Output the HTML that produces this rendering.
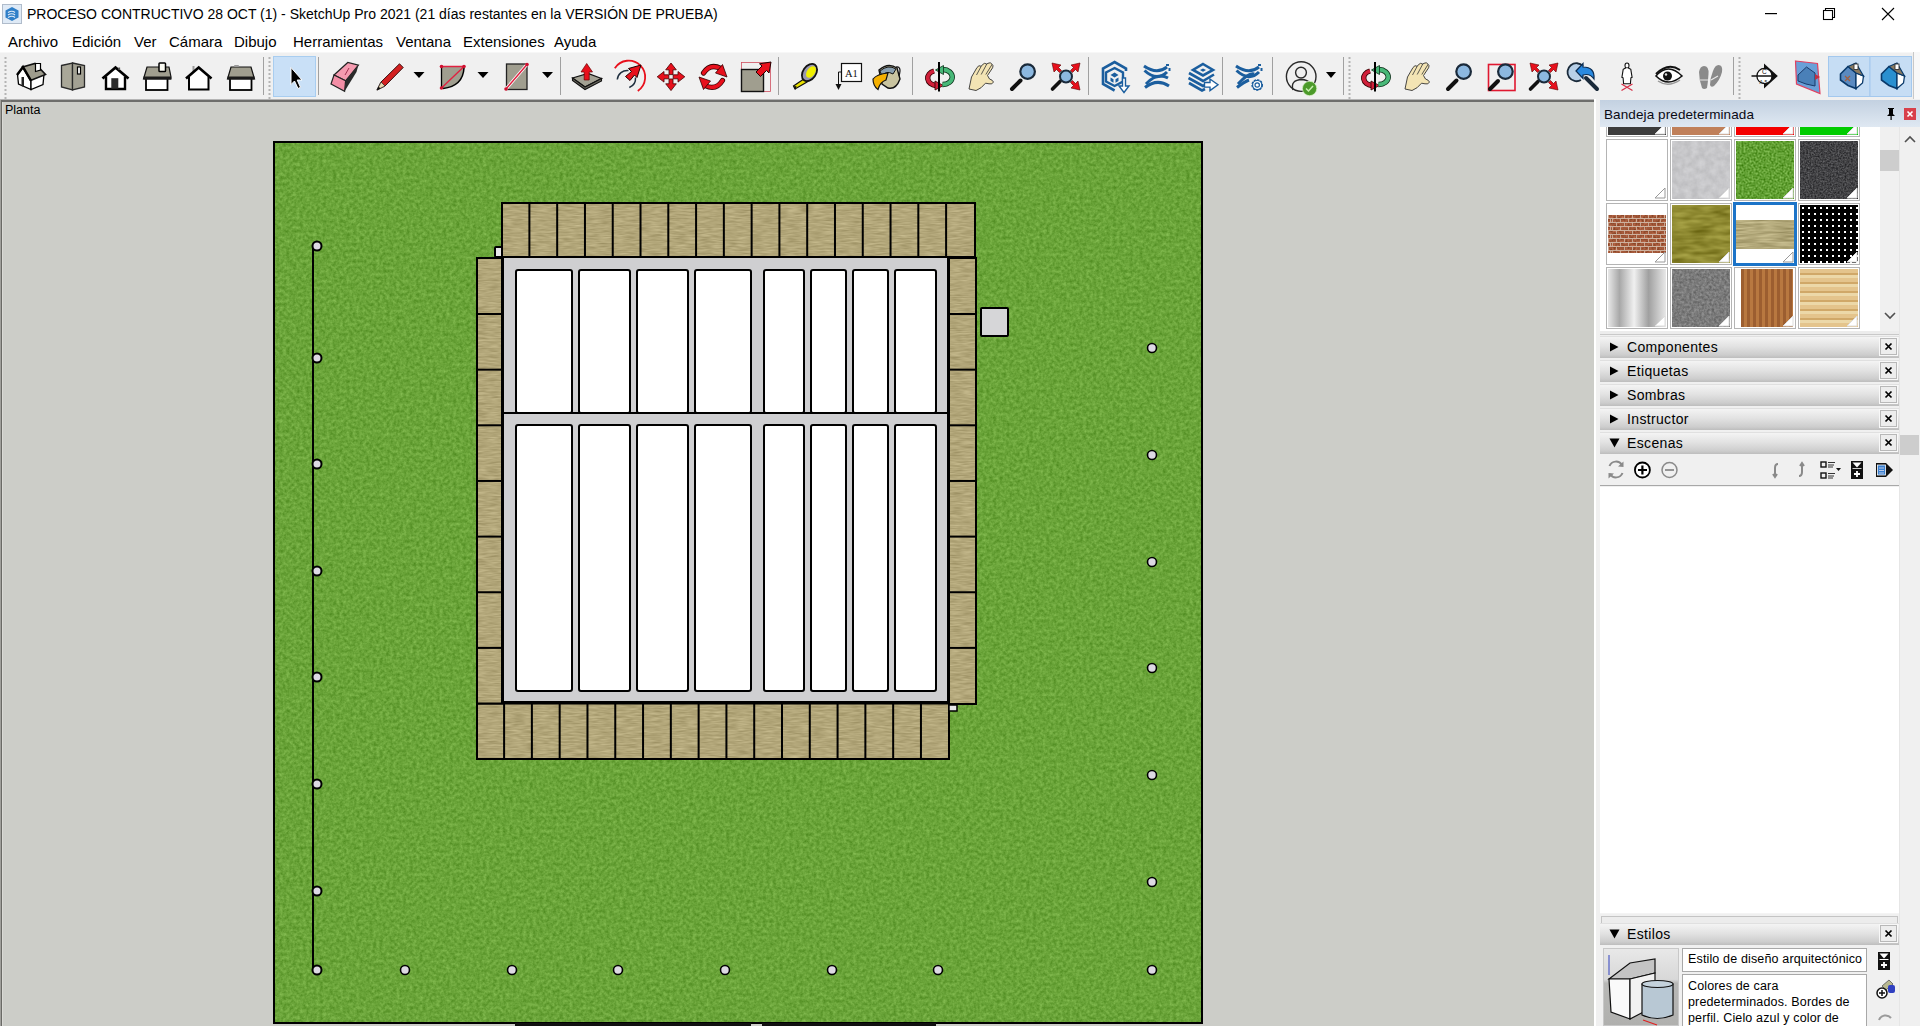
<!DOCTYPE html>
<html><head><meta charset="utf-8">
<style>
*{margin:0;padding:0;box-sizing:border-box}
html,body{width:1920px;height:1026px;overflow:hidden;background:#fff;font-family:"Liberation Sans",sans-serif;color:#000}
.a{position:absolute}
#title{left:0;top:0;width:1920px;height:26px;background:#fff}
#menu{left:0;top:26px;width:1920px;height:26px;background:#fff}
.mi{position:absolute;top:33px;font-size:15px;line-height:18px;white-space:nowrap}
#tb{left:0;top:52px;width:1920px;height:48px;background:#f0f0f0}
#vp{left:0;top:99px;width:1594px;height:927px;background:#cccdc8;border-top:1px solid #b4b4b4}
#rp{left:1594px;top:100px;width:326px;height:926px;background:#f0f0f0}
</style></head><body>
<div id="title" class="a">
  <div class="a" style="left:2px;top:4px;width:20px;height:20px;background:#dfeaf6;border:1px solid #b0bccb"></div>
  <svg class="a" style="left:4px;top:6px" width="16" height="16"><path d="M8 1 L14.5 4.5 L14.5 11.5 L8 15 L1.5 11.5 L1.5 4.5z" fill="#2f7fc8"/><path d="M4 6.5 Q8 4 11 6.5 M4 9 Q8 6.5 11 9 M4 11.5 Q8 9 11 11.5" fill="none" stroke="#dfeaf6" stroke-width="1.2"/></svg>
  <svg class="a" style="left:1760px;top:0" width="160" height="26"><rect x="5" y="13" width="12" height="1.2" fill="#000"/><rect x="63.5" y="10.5" width="9" height="9" fill="none" stroke="#000" stroke-width="1.1"/><path d="M65.5 10.5 V8.5 H74.5 V17.5 H72.5" fill="none" stroke="#000" stroke-width="1.1"/><path d="M122 8 L134 20 M134 8 L122 20" stroke="#000" stroke-width="1.1"/></svg>
  <div class="a" style="left:27px;top:5px;font-size:14px;line-height:18px;white-space:nowrap">PROCESO CONTRUCTIVO 28 OCT (1) - SketchUp Pro 2021 (21 días restantes en la VERSIÓN DE PRUEBA)</div>
</div>
<div id="menu" class="a"></div>
<div class="mi" style="left:8px">Archivo</div>
<div class="mi" style="left:72px">Edición</div>
<div class="mi" style="left:134px">Ver</div>
<div class="mi" style="left:169px">Cámara</div>
<div class="mi" style="left:234px">Dibujo</div>
<div class="mi" style="left:293px">Herramientas</div>
<div class="mi" style="left:396px">Ventana</div>
<div class="mi" style="left:463px">Extensiones</div>
<div class="mi" style="left:554px">Ayuda</div>
<div id="tb" class="a"></div>
<svg class="a" style="left:0;top:0" width="1920" height="100" viewBox="0 0 1920 100">
<rect x="0" y="52" width="1920" height="1" fill="#f7f7f7"/>
<rect x="4.5" y="57" width="2" height="2" fill="#b4b4b4"/>
<rect x="4.5" y="61" width="2" height="2" fill="#b4b4b4"/>
<rect x="4.5" y="65" width="2" height="2" fill="#b4b4b4"/>
<rect x="4.5" y="69" width="2" height="2" fill="#b4b4b4"/>
<rect x="4.5" y="73" width="2" height="2" fill="#b4b4b4"/>
<rect x="4.5" y="77" width="2" height="2" fill="#b4b4b4"/>
<rect x="4.5" y="81" width="2" height="2" fill="#b4b4b4"/>
<rect x="4.5" y="85" width="2" height="2" fill="#b4b4b4"/>
<rect x="4.5" y="89" width="2" height="2" fill="#b4b4b4"/>
<rect x="4.5" y="93" width="2" height="2" fill="#b4b4b4"/>
<rect x="4.5" y="97" width="2" height="2" fill="#b4b4b4"/>
<rect x="263" y="57" width="1" height="38" fill="#a0a0a0"/>
<rect x="268.5" y="57" width="2" height="2" fill="#b4b4b4"/>
<rect x="268.5" y="61" width="2" height="2" fill="#b4b4b4"/>
<rect x="268.5" y="65" width="2" height="2" fill="#b4b4b4"/>
<rect x="268.5" y="69" width="2" height="2" fill="#b4b4b4"/>
<rect x="268.5" y="73" width="2" height="2" fill="#b4b4b4"/>
<rect x="268.5" y="77" width="2" height="2" fill="#b4b4b4"/>
<rect x="268.5" y="81" width="2" height="2" fill="#b4b4b4"/>
<rect x="268.5" y="85" width="2" height="2" fill="#b4b4b4"/>
<rect x="268.5" y="89" width="2" height="2" fill="#b4b4b4"/>
<rect x="268.5" y="93" width="2" height="2" fill="#b4b4b4"/>
<rect x="268.5" y="97" width="2" height="2" fill="#b4b4b4"/>
<path d="M17.5 74.5 L23 67.5 L31 80 L31 89.5 L18.5 84z" fill="#fff" stroke="#000" stroke-width="1.3"/>
<path d="M31 80 L44 74 L43 84.5 L31 89.5z" fill="#fff" stroke="#000" stroke-width="1.3"/>
<path d="M22.5 67 L35 63.5 L45.5 74.5 L30.5 80.5z" fill="#9e9c8d" stroke="#111" stroke-width="1.6"/>
<path d="M17 75 L23 67 L31 80.5" fill="none" stroke="#000" stroke-width="2.4"/>
<path d="M35.5 63.5 h5 v6.5 l-5 1.5z" fill="#fff" stroke="#000" stroke-width="1.2"/>
<path d="M21.5 77 h2.5 v10 l-2.5 -1z" fill="#222"/>
<path d="M61.5 65.5 L72.5 63 L72.5 90 L61.5 87z" fill="#a9a798" stroke="#2a2a2a" stroke-width="1.3"/>
<path d="M72.5 63 L84.5 65.5 L84.5 87 L72.5 90z" fill="#a3a193" stroke="#2a2a2a" stroke-width="1.3"/>
<rect x="77.5" y="67" width="3" height="7" fill="#fff" stroke="#000" stroke-width="1.2"/>
<path d="M105.5 77 L115.5 68.5 L125.5 77 V89 H105.5z" fill="#fff"/>
<path d="M106 76.5 V89 H125 V76.5" fill="none" stroke="#000" stroke-width="2.4"/>
<path d="M102.5 78.5 L115.5 67.5 L128.5 78.5" fill="none" stroke="#000" stroke-width="2.8"/>
<rect x="111.3" y="78.2" width="7" height="10.5" fill="#2b2b2b"/>
<rect x="118.3" y="67.5" width="1.8" height="2.5" fill="#555"/>
<rect x="146" y="78" width="21.5" height="12" fill="#fff" stroke="#000" stroke-width="1.8"/>
<path d="M143.5 79 L147 67 L169 67 L171 77 L171 79z" fill="#a09e8f" stroke="#111" stroke-width="1.2"/>
<rect x="143.5" y="76.5" width="27.5" height="3" fill="#1a1a1a"/>
<rect x="159" y="63" width="6.5" height="8.5" rx="0.8" fill="#fbfbf3" stroke="#000" stroke-width="1.5"/>
<path d="M189 77 L198.7 69 L208.5 77 V89.5 H189z" fill="#fff"/><path d="M189 77 V89.5 H208.5 V77" fill="none" stroke="#000" stroke-width="2"/>
<path d="M193.5 66 v6" stroke="#999" stroke-width="2"/>
<path d="M186 78.5 L198.7 67.5 L211.5 78.5" fill="none" stroke="#000" stroke-width="2.6"/>
<rect x="230" y="78" width="21.5" height="12" fill="#fff" stroke="#000" stroke-width="1.8"/>
<path d="M227.5 79 L231 67 L251 67 L254.5 79z" fill="#a09e8f" stroke="#111" stroke-width="1.2"/>
<rect x="227.5" y="76.5" width="27" height="3" fill="#1a1a1a"/>
<rect x="234" y="65" width="5" height="2" rx="1" fill="#999"/>
<rect x="273.5" y="56.5" width="42" height="40" fill="#c9e0f7" stroke="#a8cdf0" stroke-width="1"/>
<path d="M291 67.5 L291 84.5 L294.5 81 L298 88.5 L300.5 87.3 L297.2 80 L302 80z" fill="#000" stroke="#fff" stroke-width="1"/>
<rect x="318" y="57" width="1" height="38" fill="#a0a0a0"/>
<path d="M334 75 L347.8 62.5 L358.4 65.2 L345.6 80.8z" fill="#f59bb0" stroke="#222" stroke-width="1.2"/>
<path d="M334 75 L345.6 80.8 L344.6 91.2 L331 84z" fill="#f48ea6" stroke="#222" stroke-width="1.2"/>
<path d="M345.6 80.8 L358.4 65.2 L356.5 72 L344.6 91.2z" fill="#2a2a2a"/>
<path d="M349 68 l-4 7" stroke="#a03050" stroke-width="1"/>
<path d="M377 90 L381 82 L399.5 63.8 L403.2 67.5 L385 86z" fill="#d42020" stroke="#3a1010" stroke-width="1"/>
<path d="M377 90 L381 82 L385 86z" fill="#e8d8b0" stroke="#333" stroke-width="0.8"/>
<path d="M376.5 90.5 L378.5 86.5 L380.5 88.5z" fill="#111"/>
<path d="M413.5 72 h11 l-5.5 6z" fill="#000"/>
<path d="M441.5 67 L464 67 Q464 86 443 88 L441.5 88z" fill="#a09e8f"/>
<path d="M441.5 67 L441.5 88" stroke="#000" stroke-width="1.3"/>
<path d="M464 68 Q463 86 443 88.5" fill="none" stroke="#000" stroke-width="1.5"/>
<path d="M441.5 66.5 L464 66.5 M441.5 88 L464 66.5" stroke="#e02040" stroke-width="1.4"/>
<circle cx="441.5" cy="66.5" r="1.8" fill="#d01030"/>
<circle cx="464" cy="66.5" r="1.8" fill="#d01030"/>
<circle cx="441.5" cy="88" r="1.8" fill="#d01030"/>
<path d="M477.5 72 h11 l-5.5 6z" fill="#000"/>
<rect x="506.5" y="64" width="20.5" height="25.5" fill="#a09e8f" stroke="#222" stroke-width="1.3"/>
<path d="M506 89 L527 64.5" stroke="#fff" stroke-width="3"/>
<path d="M506 89 L527 64.5" stroke="#e02040" stroke-width="1.4"/>
<circle cx="506" cy="89" r="1.8" fill="#d01030"/><circle cx="527" cy="64.5" r="1.8" fill="#d01030"/>
<path d="M542 72 h11 l-5.5 6z" fill="#000"/>
<rect x="560" y="57" width="1" height="38" fill="#a0a0a0"/>
</svg><svg class="a" style="left:0;top:0" width="1920" height="100" viewBox="0 0 1920 100">
<path d="M572.5 78 L588 73.5 L601.5 78.5 L585 87z" fill="#a3a193" stroke="#111" stroke-width="1.3"/>
<path d="M572.5 78 L572.5 80.5 L585 89.5 L601.5 81 L601.5 78.5 L585 87z" fill="#6d6b60" stroke="#111" stroke-width="1.1"/>
<path d="M586.7 63.5 L592.5 72 L589.2 72 L589.2 80 L584.2 80 L584.2 72 L581 72z" fill="#e8101c" stroke="#600" stroke-width="0.7"/>
<path d="M614.8 68.2 A 16.5 16.5 0 1 1 637.8 90.9" fill="none" stroke="#e8101c" stroke-width="1.8"/>
<path d="M617.3 79.5 A 10 10 0 0 1 628.5 70.5 M635.5 77.5 A 10 10 0 0 1 629.3 87.5" fill="none" stroke="#203040" stroke-width="1.5"/>
<path d="M641 65 L637 77.5 L634.5 75 L630 80.5 L625.5 76.5 L631.5 71.5 L628.5 68.5z" fill="#e8101c" stroke="#200" stroke-width="1"/>
<path d="M671 63 L676.3 69.8 L673 69.8 L673 74.6 L669 74.6 L669 69.8 L665.7 69.8z" fill="#e8101c" stroke="#400" stroke-width="0.8"/>
<path d="M671 90.6 L676.3 83.8 L673 83.8 L673 79 L669 79 L669 83.8 L665.7 83.8z" fill="#e8101c" stroke="#400" stroke-width="0.8"/>
<path d="M657.2 76.8 L664 71.5 L664 74.8 L668.8 74.8 L668.8 78.8 L664 78.8 L664 82.1z" fill="#e8101c" stroke="#400" stroke-width="0.8"/>
<path d="M684.8 76.8 L678 71.5 L678 74.8 L673.2 74.8 L673.2 78.8 L678 78.8 L678 82.1z" fill="#e8101c" stroke="#400" stroke-width="0.8"/>
<path d="M703.5 73 Q710 63 721 68.5" fill="none" stroke="#300" stroke-width="5.2" stroke-linecap="round"/>
<path d="M703.5 73 Q710 63 721 68.5" fill="none" stroke="#e8101c" stroke-width="3.6" stroke-linecap="round"/>
<path d="M727 77 L722.5 64.5 L715.5 73z" fill="#e8101c" stroke="#300" stroke-width="0.8"/>
<path d="M722.5 80.5 Q716 91 705 85.5" fill="none" stroke="#300" stroke-width="5.2" stroke-linecap="round"/>
<path d="M722.5 80.5 Q716 91 705 85.5" fill="none" stroke="#e8101c" stroke-width="3.6" stroke-linecap="round"/>
<path d="M699 77 L703.5 89.5 L710.5 81z" fill="#e8101c" stroke="#300" stroke-width="0.8"/>
<rect x="741.5" y="62.5" width="29" height="29" fill="none" stroke="#d05060" stroke-width="0.8"/>
<rect x="741.5" y="69.5" width="22" height="22" fill="#a09e8f" stroke="#111" stroke-width="1.4"/>
<path d="M771 62 L769 73 L766.5 70.5 L760.5 76.5 L756 72 L762 66 L759.5 63.8z" fill="#e8101c" stroke="#200" stroke-width="1" />
<rect x="778" y="57" width="1" height="38" fill="#a0a0a0"/>
<path d="M795 89 L793.5 86 L804.5 78.5 L807 82z" fill="#e8e000" stroke="#111" stroke-width="1.2"/>
<path d="M793.5 86.5 L795.5 90 L796.5 86z" fill="#111"/>
<ellipse cx="809.5" cy="72.5" rx="6.5" ry="9.5" transform="rotate(35 809.5 72.5)" fill="#9a98b0" stroke="#111" stroke-width="1.8"/>
<ellipse cx="811" cy="72" rx="4" ry="6.5" transform="rotate(35 811 72)" fill="#f0f000"/>
<rect x="841.5" y="63.5" width="20" height="18" fill="#fff" stroke="#111" stroke-width="1.2"/>
<text x="845" y="77" font-family="Liberation Serif" font-size="10.5" fill="#111">A1</text>
<path d="M841 72 L838.5 72 L838.5 85" fill="none" stroke="#111" stroke-width="1"/>
<path d="M835.5 84 L841.5 84 L838.5 90z" fill="#111"/>
<path d="M879 70 Q888 62 897 68 L900 79 Q896 90 888 88 L882 84z" fill="#c9c4a0" stroke="#111" stroke-width="1.4"/>
<path d="M880 71 Q888 64 896 69 L893 74 Q886 70 882 76z" fill="#8aa0b0" stroke="#111" stroke-width="1"/>
<path d="M896 67 Q902 66 899 76" fill="none" stroke="#111" stroke-width="1.2"/>
<path d="M888 73 Q877 74 873 79 Q873 86 878 89.5 Q880 82 886 80z" fill="#f5b000" stroke="#111" stroke-width="1.2"/>
<rect x="912" y="57" width="1" height="38" fill="#a0a0a0"/>
<path d="M934 71 A 9.5 7.5 0 0 0 936 85.5" fill="none" stroke="#300" stroke-width="5.4"/>
<path d="M934 71 A 9.5 7.5 0 0 0 936 85.5" fill="none" stroke="#d0203a" stroke-width="3.8"/>
<path d="M935 81 L943.5 85.5 L935 90z" fill="#d0203a" stroke="#300" stroke-width="0.8"/>
<path d="M943 69.5 A 9.5 7.5 0 0 1 942.5 84.5" fill="none" stroke="#0a3018" stroke-width="5.4"/>
<path d="M943 69.5 A 9.5 7.5 0 0 1 942.5 84.5" fill="none" stroke="#48b878" stroke-width="3.8"/>
<path d="M943.5 65.5 L935.5 70 L943.5 74.5z" fill="#48b878" stroke="#0a3018" stroke-width="0.8"/>
<rect x="938" y="62" width="2" height="29.5" fill="#000"/>
<path d="M969 89 L971.5 77 L977 67.5 Q979 64.5 981.2 66.3 L982.3 64.8 Q984.5 62.3 986.8 64 L988 63.3 Q990.5 61.8 992 64.2 Q993.8 65.5 992.6 67.8 L987.5 75.5 L989.5 79 Q992.5 79.8 993.5 82 Q992.3 84.8 989 83.8 L985.5 83.2 Q981.5 88.5 976 90.5z" fill="#f3e4b4" stroke="#333" stroke-width="0.9"/>
<path d="M981.2 66.3 L976.5 75 M986.8 64 L981.2 74.5 M992 64.5 L985.8 74.5" stroke="#333" stroke-width="0.8"/>
<path d="M1012 89 L1020.5 80.5" stroke="#111" stroke-width="4" stroke-linecap="round"/>
<circle cx="1027.6" cy="71.6" r="7.3" fill="#8cb8e0" stroke="#1a2a3a" stroke-width="2.2"/>
<path d="M1052.5 89 L1060 81.5" stroke="#111" stroke-width="3.6" stroke-linecap="round"/>
<circle cx="1066" cy="76.5" r="6" fill="#8cb8e0" stroke="#1a2a3a" stroke-width="2"/>
<path d="M1052 63 L1061 65 L1058.5 67.5 L1061.5 70.5 L1059.5 72.5 L1056.5 69.5 L1054 72z" fill="#e8101c" stroke="#500" stroke-width="0.6"/>
<path d="M1080 63 L1071 65 L1073.5 67.5 L1070.5 70.5 L1072.5 72.5 L1075.5 69.5 L1078 72z" fill="#e8101c" stroke="#500" stroke-width="0.6"/>
<path d="M1080 90 L1071 88 L1073.5 85.5 L1070.5 82.5 L1072.5 80.5 L1075.5 83.5 L1078 81z" fill="#e8101c" stroke="#500" stroke-width="0.6"/>
<rect x="1088" y="57" width="1" height="38" fill="#a0a0a0"/>
</svg><svg class="a" style="left:0;top:0" width="1920" height="100" viewBox="0 0 1920 100">
<path d="M1126 71 L1126 68.5 L1114.6 62 L1103 68.5 L1103 84 L1114.6 90.5" fill="none" stroke="#1b5e9e" stroke-width="2.6"/>
<path d="M1114.6 68 L1123 72.5 L1123 81.5 L1114.6 86 L1106 81.5 L1106 72.5z" fill="none" stroke="#1b5e9e" stroke-width="2.4"/>
<path d="M1114.6 72.5 L1118.5 75 L1114.6 77.5 L1110.5 75z M1110.5 77.5 l3 1.8 v3.5 l-3 -1.8z M1118.5 77.5 l-3 1.8 v3.5 l3 -1.8z" fill="#1b5e9e"/>
<path d="M1122.5 78 h3 v8 h3.5 l-5 6.5 l-5 -6.5 h3.5z" fill="#fff" stroke="#1b5e9e" stroke-width="1.4"/>
<g transform="translate(0,0)">
<path d="M1144 66 Q1157 75 1167 67" fill="none" stroke="#1b5e9e" stroke-width="3"/>
<path d="M1144.5 70.5 Q1157 82 1167 72" fill="none" stroke="#1b5e9e" stroke-width="3"/>
<path d="M1146 84 Q1157 72 1168 78" fill="none" stroke="#1b5e9e" stroke-width="3"/>
<path d="M1145 87.5 Q1157 78 1169 86" fill="none" stroke="#1b5e9e" stroke-width="3"/>
<rect x="1166" y="64" width="3" height="2" fill="#1b5e9e"/><rect x="1168.5" y="68" width="2" height="3" fill="#1b5e9e"/>
</g>
<path d="M1203 64 L1213 70 L1203 75.5 L1193 70z" fill="none" stroke="#1b5e9e" stroke-width="2.6"/>
<path d="M1203 68.5 L1206 70 L1203 71.7 L1200 70z" fill="#1b5e9e"/>
<path d="M1189 73 L1203 81 L1214 74.5" fill="none" stroke="#1b5e9e" stroke-width="2.6"/>
<path d="M1188.5 78 L1203 86 L1208 83.5" fill="none" stroke="#1b5e9e" stroke-width="2.6"/>
<path d="M1189 83 L1202 90.5 L1205 89" fill="none" stroke="#1b5e9e" stroke-width="2.6"/>
<path d="M1204.5 82.5 h5.5 v-3.5 l8 5.8 l-8 5.8 v-3.5 h-5.5z" fill="#fff" stroke="#1b5e9e" stroke-width="1.4"/>
<rect x="1222" y="57" width="1" height="38" fill="#a0a0a0"/>
<g transform="translate(92,0)">
<path d="M1144 66 Q1157 75 1167 67" fill="none" stroke="#1b5e9e" stroke-width="3"/>
<path d="M1144.5 70.5 Q1157 82 1167 72" fill="none" stroke="#1b5e9e" stroke-width="3"/>
<path d="M1146 84 Q1157 72 1162 74" fill="none" stroke="#1b5e9e" stroke-width="3"/>
<path d="M1145 87.5 Q1152 82 1157 80" fill="none" stroke="#1b5e9e" stroke-width="3"/>
<rect x="1166" y="64" width="3" height="2" fill="#1b5e9e"/><rect x="1168.5" y="68" width="2" height="3" fill="#1b5e9e"/>
</g>
<circle cx="1257.2" cy="85" r="7.5" fill="#f0f0f0"/>
<circle cx="1257.2" cy="85" r="5.2" fill="#fff" stroke="#1b5e9e" stroke-width="1.3" stroke-dasharray="2.2 1.2"/>
<circle cx="1257.2" cy="85" r="4.6" fill="none" stroke="#1b5e9e" stroke-width="1.2"/>
<circle cx="1257.2" cy="85" r="2.2" fill="none" stroke="#1b5e9e" stroke-width="1.2"/>
<rect x="1272" y="57" width="1" height="38" fill="#a0a0a0"/>
<circle cx="1301.2" cy="76.6" r="14.8" fill="none" stroke="#2a2a2a" stroke-width="1.4"/>
<circle cx="1301" cy="72.6" r="5.4" fill="none" stroke="#2a2a2a" stroke-width="1.4"/>
<path d="M1293 90 Q1290 80 1302 79.5 Q1307 80 1309 82" fill="none" stroke="#2a2a2a" stroke-width="1.4"/>
<circle cx="1309.6" cy="88.5" r="7.2" fill="#4c9a2a" stroke="#d8f0c8" stroke-width="0.8"/>
<path d="M1306 88.5 l2.5 2.5 l4.5 -5" fill="none" stroke="#c8f0b0" stroke-width="1.5"/>
<path d="M1326 72 h10 l-5 6z" fill="#000"/>
<rect x="1343" y="57" width="1" height="38" fill="#a0a0a0"/>
<rect x="1348.5" y="57" width="2" height="2" fill="#b4b4b4"/>
<rect x="1348.5" y="61" width="2" height="2" fill="#b4b4b4"/>
<rect x="1348.5" y="65" width="2" height="2" fill="#b4b4b4"/>
<rect x="1348.5" y="69" width="2" height="2" fill="#b4b4b4"/>
<rect x="1348.5" y="73" width="2" height="2" fill="#b4b4b4"/>
<rect x="1348.5" y="77" width="2" height="2" fill="#b4b4b4"/>
<rect x="1348.5" y="81" width="2" height="2" fill="#b4b4b4"/>
<rect x="1348.5" y="85" width="2" height="2" fill="#b4b4b4"/>
<rect x="1348.5" y="89" width="2" height="2" fill="#b4b4b4"/>
<rect x="1348.5" y="93" width="2" height="2" fill="#b4b4b4"/>
<rect x="1348.5" y="97" width="2" height="2" fill="#b4b4b4"/>
<g transform="translate(436,0)">
<path d="M934 71 A 9.5 7.5 0 0 0 936 85.5" fill="none" stroke="#300" stroke-width="5.4"/>
<path d="M934 71 A 9.5 7.5 0 0 0 936 85.5" fill="none" stroke="#d0203a" stroke-width="3.8"/>
<path d="M935 81 L943.5 85.5 L935 90z" fill="#d0203a" stroke="#300" stroke-width="0.8"/>
<path d="M943 69.5 A 9.5 7.5 0 0 1 942.5 84.5" fill="none" stroke="#0a3018" stroke-width="5.4"/>
<path d="M943 69.5 A 9.5 7.5 0 0 1 942.5 84.5" fill="none" stroke="#48b878" stroke-width="3.8"/>
<path d="M943.5 65.5 L935.5 70 L943.5 74.5z" fill="#48b878" stroke="#0a3018" stroke-width="0.8"/>
<rect x="938" y="62" width="2" height="29.5" fill="#000"/>
<path d="M969 89 L971.5 77 L977 67.5 Q979 64.5 981.2 66.3 L982.3 64.8 Q984.5 62.3 986.8 64 L988 63.3 Q990.5 61.8 992 64.2 Q993.8 65.5 992.6 67.8 L987.5 75.5 L989.5 79 Q992.5 79.8 993.5 82 Q992.3 84.8 989 83.8 L985.5 83.2 Q981.5 88.5 976 90.5z" fill="#f3e4b4" stroke="#333" stroke-width="0.9"/>
<path d="M981.2 66.3 L976.5 75 M986.8 64 L981.2 74.5 M992 64.5 L985.8 74.5" stroke="#333" stroke-width="0.8"/>
<path d="M1012 89 L1020.5 80.5" stroke="#111" stroke-width="4" stroke-linecap="round"/>
<circle cx="1027.6" cy="71.6" r="7.3" fill="#8cb8e0" stroke="#1a2a3a" stroke-width="2.2"/>
</g>
<rect x="1488.5" y="64.5" width="26.5" height="26" fill="none" stroke="#e01830" stroke-width="1.6"/>
<path d="M1490 89 L1498 81" stroke="#111" stroke-width="4" stroke-linecap="round"/>
<circle cx="1505.4" cy="71.6" r="7.3" fill="#8cb8e0" stroke="#1a2a3a" stroke-width="2.2"/>
<g transform="translate(478,0)">
<path d="M1052.5 89 L1060 81.5" stroke="#111" stroke-width="3.6" stroke-linecap="round"/>
<circle cx="1066" cy="76.5" r="6" fill="#8cb8e0" stroke="#1a2a3a" stroke-width="2"/>
<path d="M1052 63 L1061 65 L1058.5 67.5 L1061.5 70.5 L1059.5 72.5 L1056.5 69.5 L1054 72z" fill="#e8101c" stroke="#500" stroke-width="0.6"/>
<path d="M1080 63 L1071 65 L1073.5 67.5 L1070.5 70.5 L1072.5 72.5 L1075.5 69.5 L1078 72z" fill="#e8101c" stroke="#500" stroke-width="0.6"/>
<path d="M1080 90 L1071 88 L1073.5 85.5 L1070.5 82.5 L1072.5 80.5 L1075.5 83.5 L1078 81z" fill="#e8101c" stroke="#500" stroke-width="0.6"/>
</g>
<path d="M1583 66 A 9 9 0 1 0 1581 80" fill="#b8d0e8" stroke="#1a2a3a" stroke-width="1.8"/>
<path d="M1576 71 L1583 63.5 L1583 67 Q1595 67 1594 79 Q1590 73 1583 75 L1583 78.5z" fill="#2a8ae0" stroke="#0a2a50" stroke-width="1.2"/>
<path d="M1586 78 L1597 89" stroke="#1a2a3a" stroke-width="4" stroke-linecap="round"/>
<path d="M1627 63 q2 0 2 2.5 q0 2 -1 2.3 l2.8 1.5 l1.3 8 l-1.2 0.5 l-0.5 6 h-6.8 l-0.5 -6 l-1.2 -0.5 l1.3 -8 l2.8 -1.5 q-1 -0.3 -1 -2.3 q0 -2.5 2 -2.5z" fill="#fff" stroke="#111" stroke-width="1.1"/>
<path d="M1621.5 90.5 L1632.5 84 M1621.5 84 L1632.5 90.5" stroke="#d83048" stroke-width="1.3"/>
<path d="M1656 76 Q1668 62 1682 76 Q1668 88 1656 76z" fill="#fff" stroke="#111" stroke-width="1.6"/>
<path d="M1656 74 Q1668 62 1680 70" fill="none" stroke="#111" stroke-width="2"/>
<circle cx="1667.5" cy="76" r="4.5" fill="#111"/>
<circle cx="1666" cy="74.5" r="1.2" fill="#ddd"/>
<path d="M1658 81 Q1668 88 1680 80" fill="none" stroke="#999" stroke-width="1.5"/>
<path d="M1704 66 Q1709 66 1708.5 74 Q1708 82 1707 88 Q1704 90 1702 88 Q1699 80 1699 72 Q1700 66 1704 66z" fill="#8a8a8a"/>
<path d="M1718.5 65 Q1723 65 1722 72 Q1720 80 1714 86 Q1711 88 1710 85 Q1710 78 1713 71 Q1715 65 1718.5 65z" fill="#8a8a8a"/>
<path d="M1700 80 h8 M1711 80 l7 -4" stroke="#e8e8e8" stroke-width="1.2"/>
<rect x="1733" y="57" width="1" height="38" fill="#a0a0a0"/>
<rect x="1738.5" y="57" width="2" height="2" fill="#b4b4b4"/>
<rect x="1738.5" y="61" width="2" height="2" fill="#b4b4b4"/>
<rect x="1738.5" y="65" width="2" height="2" fill="#b4b4b4"/>
<rect x="1738.5" y="69" width="2" height="2" fill="#b4b4b4"/>
<rect x="1738.5" y="73" width="2" height="2" fill="#b4b4b4"/>
<rect x="1738.5" y="77" width="2" height="2" fill="#b4b4b4"/>
<rect x="1738.5" y="81" width="2" height="2" fill="#b4b4b4"/>
<rect x="1738.5" y="85" width="2" height="2" fill="#b4b4b4"/>
<rect x="1738.5" y="89" width="2" height="2" fill="#b4b4b4"/>
<rect x="1738.5" y="93" width="2" height="2" fill="#b4b4b4"/>
<rect x="1738.5" y="97" width="2" height="2" fill="#b4b4b4"/>
<path d="M1764 63.5 L1777.8 76 L1764 88.5z" fill="#111"/>
<circle cx="1764.5" cy="76" r="7.6" fill="#fff" stroke="#111" stroke-width="1.3"/>
<path d="M1751.5 76 h21" stroke="#111" stroke-width="1.5"/>
<text x="1762" y="73.5" font-family="Liberation Sans" font-size="6.5" fill="#111">C</text>
<text x="1759.5" y="83.5" font-family="Liberation Sans" font-size="5" fill="#111">A-5</text>
<path d="M1795.5 61 L1817.5 63.5 L1820 93.5 L1796.5 84z" fill="#6aa0d8" stroke="#e04060" stroke-width="1.2"/>
<path d="M1798 75 L1806.5 67 L1815 73 L1815 86 L1806 84 L1798 81z" fill="#4a80b8" stroke="#1a3a6a" stroke-width="1"/>
<path d="M1815 74 l5 3 l-5 3z" fill="#c03040"/>
<rect x="1828.5" y="56.5" width="41.5" height="40" fill="#c6ddf4" stroke="#a3c8ee" stroke-width="1"/>
<rect x="1870" y="56.5" width="41.5" height="40" fill="#c6ddf4" stroke="#a3c8ee" stroke-width="1"/>
<g transform="translate(0,0)">
<path d="M1840.5 74 L1848 66.5 L1856 73 L1856 88.5 L1848 85.5 L1840.5 80z" fill="#5a8ac0" stroke="#0a3a6a" stroke-width="1.6"/>
<path d="M1856 73 L1863.5 76 L1862.5 83 L1856 88.5z" fill="#fff" stroke="#0a3a6a" stroke-width="1.3"/>
<path d="M1848 66.5 L1856 63 L1863.5 76 L1856 73z" fill="#8a7a60" stroke="#0a3a6a" stroke-width="1.2"/>
<rect x="1854" y="64" width="4" height="5.5" fill="#fff" stroke="#333" stroke-width="0.9"/>
<path d="M1845 76 l5 5 M1850 76 l-5 5" stroke="#a06040" stroke-width="1.3"/>
</g>
<g transform="translate(41,0)">
<path d="M1840.5 74 L1848 66.5 L1856 73 L1856 88.5 L1848 85.5 L1840.5 80z" fill="#2a90d0" stroke="#0a3a6a" stroke-width="1.6"/>
<path d="M1856 73 L1863.5 76 L1862.5 83 L1856 88.5z" fill="#fff" stroke="#0a3a6a" stroke-width="1.3"/>
<path d="M1848 66.5 L1856 63 L1863.5 76 L1856 73z" fill="#8a7a60" stroke="#0a3a6a" stroke-width="1.2"/>
<rect x="1854" y="64" width="4" height="5.5" fill="#fff" stroke="#333" stroke-width="0.9"/>
</g>
<rect x="1913" y="52" width="1" height="47" fill="#c8c8c8"/><rect x="1914" y="52" width="6" height="47" fill="#f8f8f8"/>
</svg>
<div id="vp" class="a">
  <div class="a" style="left:0;top:0;width:1594px;height:2px;background:#6e6e6c"></div>
  <div class="a" style="left:0;top:0;width:1px;height:927px;background:#a0a09c"></div>
  <div class="a" style="left:1px;top:0;width:1px;height:927px;background:#6a6a66"></div>
  <div class="a" style="left:2px;top:2px;width:1px;height:925px;background:#dadad6"></div>
  <div class="a" style="left:5px;top:3px;font-size:12.5px;line-height:14px">Planta</div>
</div>
<svg class="a" style="left:0;top:0" width="1594" height="1026" viewBox="0 0 1594 1026">
<defs><filter id="gn" x="0" y="0" width="100%" height="100%" color-interpolation-filters="sRGB"><feTurbulence type="fractalNoise" baseFrequency="0.3" numOctaves="3" seed="5"/><feColorMatrix type="matrix" values="0.26 0 0 0 0.286  0.24 0 0 0 0.523  0.24 0 0 0 0.104  0 0 0 0 1"/></filter><filter id="wn" x="0" y="0" width="100%" height="100%" color-interpolation-filters="sRGB"><feTurbulence type="fractalNoise" baseFrequency="0.08 0.6" numOctaves="2" seed="9"/><feColorMatrix type="matrix" values="0.22 0 0 0 0.588  0.22 0 0 0 0.541  0.22 0 0 0 0.365  0 0 0 0 1"/></filter><filter id="grass" x="0" y="0" width="100%" height="100%"><feTurbulence type="fractalNoise" baseFrequency="0.35" numOctaves="2" seed="3"/><feColorMatrix type="matrix" values="0 0 0 0 0.38  0 0 0 0 0.63  0 0 0 0 0.22  0 0 0 -1.4 1.15"/></filter></defs>
<rect x="274" y="142" width="928" height="881" fill="#679e37" stroke="#000" stroke-width="2"/>
<rect x="275" y="143" width="926" height="879" filter="url(#gn)"/>
<rect x="515" y="1023" width="236" height="3" fill="#111"/>
<rect x="762" y="1023" width="174" height="3" fill="#111"/>
<rect x="503" y="257" width="445" height="446" fill="#cfcfd1" stroke="#000" stroke-width="2"/>
<rect x="502" y="701" width="447" height="3.5" fill="#000"/>
<rect x="502" y="203" width="473" height="54" filter="url(#wn)"/>
<rect x="502" y="203" width="473" height="54" fill="none" stroke="#000" stroke-width="2"/>
<rect x="528.4" y="203" width="2" height="54" fill="#000"/>
<rect x="556.18" y="203" width="2" height="54" fill="#000"/>
<rect x="583.96" y="203" width="2" height="54" fill="#000"/>
<rect x="611.74" y="203" width="2" height="54" fill="#000"/>
<rect x="639.52" y="203" width="2" height="54" fill="#000"/>
<rect x="667.3" y="203" width="2" height="54" fill="#000"/>
<rect x="695.08" y="203" width="2" height="54" fill="#000"/>
<rect x="722.86" y="203" width="2" height="54" fill="#000"/>
<rect x="750.64" y="203" width="2" height="54" fill="#000"/>
<rect x="778.42" y="203" width="2" height="54" fill="#000"/>
<rect x="806.2" y="203" width="2" height="54" fill="#000"/>
<rect x="833.98" y="203" width="2" height="54" fill="#000"/>
<rect x="861.76" y="203" width="2" height="54" fill="#000"/>
<rect x="889.54" y="203" width="2" height="54" fill="#000"/>
<rect x="917.32" y="203" width="2" height="54" fill="#000"/>
<rect x="945.1" y="203" width="2" height="54" fill="#000"/>
<rect x="477" y="703.5" width="472" height="55.5" filter="url(#wn)"/>
<rect x="477" y="703.5" width="472" height="55.5" fill="none" stroke="#000" stroke-width="2"/>
<rect x="503.1" y="703.5" width="2" height="55.5" fill="#000"/>
<rect x="530.89" y="703.5" width="2" height="55.5" fill="#000"/>
<rect x="558.68" y="703.5" width="2" height="55.5" fill="#000"/>
<rect x="586.47" y="703.5" width="2" height="55.5" fill="#000"/>
<rect x="614.26" y="703.5" width="2" height="55.5" fill="#000"/>
<rect x="642.05" y="703.5" width="2" height="55.5" fill="#000"/>
<rect x="669.84" y="703.5" width="2" height="55.5" fill="#000"/>
<rect x="697.63" y="703.5" width="2" height="55.5" fill="#000"/>
<rect x="725.42" y="703.5" width="2" height="55.5" fill="#000"/>
<rect x="753.21" y="703.5" width="2" height="55.5" fill="#000"/>
<rect x="781.0" y="703.5" width="2" height="55.5" fill="#000"/>
<rect x="808.79" y="703.5" width="2" height="55.5" fill="#000"/>
<rect x="836.58" y="703.5" width="2" height="55.5" fill="#000"/>
<rect x="864.37" y="703.5" width="2" height="55.5" fill="#000"/>
<rect x="892.16" y="703.5" width="2" height="55.5" fill="#000"/>
<rect x="919.95" y="703.5" width="2" height="55.5" fill="#000"/>
<rect x="477" y="258" width="25" height="445.5" filter="url(#wn)"/>
<rect x="477" y="258" width="25" height="445.5" fill="none" stroke="#000" stroke-width="2"/>
<rect x="477" y="313.0" width="25" height="2" fill="#000"/>
<rect x="477" y="368.65" width="25" height="2" fill="#000"/>
<rect x="477" y="424.3" width="25" height="2" fill="#000"/>
<rect x="477" y="479.95" width="25" height="2" fill="#000"/>
<rect x="477" y="535.6" width="25" height="2" fill="#000"/>
<rect x="477" y="591.25" width="25" height="2" fill="#000"/>
<rect x="477" y="646.9" width="25" height="2" fill="#000"/>
<rect x="949" y="258" width="27" height="446" filter="url(#wn)"/>
<rect x="949" y="258" width="27" height="446" fill="none" stroke="#000" stroke-width="2"/>
<rect x="949" y="313.0" width="27" height="2" fill="#000"/>
<rect x="949" y="368.65" width="27" height="2" fill="#000"/>
<rect x="949" y="424.3" width="27" height="2" fill="#000"/>
<rect x="949" y="479.95" width="27" height="2" fill="#000"/>
<rect x="949" y="535.6" width="27" height="2" fill="#000"/>
<rect x="949" y="591.25" width="27" height="2" fill="#000"/>
<rect x="949" y="646.9" width="27" height="2" fill="#000"/>
<rect x="516" y="270" width="56" height="143" rx="2" fill="#fff" stroke="#000" stroke-width="2"/>
<rect x="516" y="425" width="56" height="266" rx="2" fill="#fff" stroke="#000" stroke-width="2"/>
<rect x="579" y="270" width="51" height="143" rx="2" fill="#fff" stroke="#000" stroke-width="2"/>
<rect x="579" y="425" width="51" height="266" rx="2" fill="#fff" stroke="#000" stroke-width="2"/>
<rect x="637" y="270" width="51" height="143" rx="2" fill="#fff" stroke="#000" stroke-width="2"/>
<rect x="637" y="425" width="51" height="266" rx="2" fill="#fff" stroke="#000" stroke-width="2"/>
<rect x="695" y="270" width="56" height="143" rx="2" fill="#fff" stroke="#000" stroke-width="2"/>
<rect x="695" y="425" width="56" height="266" rx="2" fill="#fff" stroke="#000" stroke-width="2"/>
<rect x="764" y="270" width="40" height="143" rx="2" fill="#fff" stroke="#000" stroke-width="2"/>
<rect x="764" y="425" width="40" height="266" rx="2" fill="#fff" stroke="#000" stroke-width="2"/>
<rect x="811" y="270" width="35" height="143" rx="2" fill="#fff" stroke="#000" stroke-width="2"/>
<rect x="811" y="425" width="35" height="266" rx="2" fill="#fff" stroke="#000" stroke-width="2"/>
<rect x="853" y="270" width="35" height="143" rx="2" fill="#fff" stroke="#000" stroke-width="2"/>
<rect x="853" y="425" width="35" height="266" rx="2" fill="#fff" stroke="#000" stroke-width="2"/>
<rect x="895" y="270" width="41" height="143" rx="2" fill="#fff" stroke="#000" stroke-width="2"/>
<rect x="895" y="425" width="41" height="266" rx="2" fill="#fff" stroke="#000" stroke-width="2"/>
<rect x="503" y="412" width="445" height="2" fill="#000"/>
<rect x="495" y="247" width="7" height="10" rx="1" fill="#e8e8ea" stroke="#000" stroke-width="2"/>
<rect x="981" y="308" width="27" height="28" rx="1" fill="#d6d6d8" stroke="#000" stroke-width="2"/>
<rect x="949" y="705" width="8" height="6" fill="#e8e8ea" stroke="#000" stroke-width="1.5"/>
<rect x="312" y="246" width="2" height="724" fill="#000"/>
<circle cx="317" cy="246" r="4.5" fill="#ddd9e3" stroke="#000" stroke-width="2"/>
<circle cx="317" cy="358" r="4.5" fill="#ddd9e3" stroke="#000" stroke-width="2"/>
<circle cx="317" cy="464" r="4.5" fill="#ddd9e3" stroke="#000" stroke-width="2"/>
<circle cx="317" cy="571" r="4.5" fill="#ddd9e3" stroke="#000" stroke-width="2"/>
<circle cx="317" cy="677" r="4.5" fill="#ddd9e3" stroke="#000" stroke-width="2"/>
<circle cx="317" cy="784" r="4.5" fill="#ddd9e3" stroke="#000" stroke-width="2"/>
<circle cx="317" cy="891" r="4.5" fill="#ddd9e3" stroke="#000" stroke-width="2"/>
<circle cx="317" cy="970" r="4.5" fill="#ddd9e3" stroke="#000" stroke-width="2"/>
<circle cx="405" cy="970" r="4.5" fill="#ddd9e3" stroke="#000" stroke-width="1.6"/>
<circle cx="512" cy="970" r="4.5" fill="#ddd9e3" stroke="#000" stroke-width="1.6"/>
<circle cx="618" cy="970" r="4.5" fill="#ddd9e3" stroke="#000" stroke-width="1.6"/>
<circle cx="725" cy="970" r="4.5" fill="#ddd9e3" stroke="#000" stroke-width="1.6"/>
<circle cx="832" cy="970" r="4.5" fill="#ddd9e3" stroke="#000" stroke-width="1.6"/>
<circle cx="938" cy="970" r="4.5" fill="#ddd9e3" stroke="#000" stroke-width="1.6"/>
<circle cx="1152" cy="970" r="4.5" fill="#ddd9e3" stroke="#000" stroke-width="1.6"/>
<circle cx="1152" cy="348" r="4.5" fill="#ddd9e3" stroke="#000" stroke-width="1.6"/>
<circle cx="1152" cy="455" r="4.5" fill="#ddd9e3" stroke="#000" stroke-width="1.6"/>
<circle cx="1152" cy="562" r="4.5" fill="#ddd9e3" stroke="#000" stroke-width="1.6"/>
<circle cx="1152" cy="668" r="4.5" fill="#ddd9e3" stroke="#000" stroke-width="1.6"/>
<circle cx="1152" cy="775" r="4.5" fill="#ddd9e3" stroke="#000" stroke-width="1.6"/>
<circle cx="1152" cy="882" r="4.5" fill="#ddd9e3" stroke="#000" stroke-width="1.6"/>
</svg>
<div id="rp" class="a"></div>
<svg width="0" height="0" style="position:absolute"><defs><filter id="brk" x="0" y="0" width="100%" height="100%" color-interpolation-filters="sRGB"><feTurbulence type="fractalNoise" baseFrequency="0.5" numOctaves="2" seed="2"/><feColorMatrix values="0.4 0 0 0 0.43  0.3 0 0 0 0.19  0.3 0 0 0 0.07  0 0 0 0 1"/></filter><filter id="tc1" x="0" y="0" width="100%" height="100%" color-interpolation-filters="sRGB"><feTurbulence type="fractalNoise" baseFrequency="0.15" numOctaves="3" seed="4"/><feColorMatrix values="0.12 0 0 0 0.72  0.12 0 0 0 0.72  0.12 0 0 0 0.73  0 0 0 0 1"/></filter><filter id="tc2" x="0" y="0" width="100%" height="100%" color-interpolation-filters="sRGB"><feTurbulence type="fractalNoise" baseFrequency="0.5" numOctaves="2" seed="6"/><feColorMatrix values="0.5 0 0 0 0.13  0.45 0 0 0 0.40  0.5 0 0 0 -0.05  0 0 0 0 1"/></filter><filter id="tc3" x="0" y="0" width="100%" height="100%" color-interpolation-filters="sRGB"><feTurbulence type="fractalNoise" baseFrequency="0.6" numOctaves="2" seed="8"/><feColorMatrix values="0.4 0 0 0 0.06  0.4 0 0 0 0.06  0.4 0 0 0 0.07  0 0 0 0 1"/></filter><filter id="tc4" x="0" y="0" width="100%" height="100%" color-interpolation-filters="sRGB"><feTurbulence type="fractalNoise" baseFrequency="0.05 0.2" numOctaves="2" seed="1"/><feColorMatrix values="0.35 0 0 0 0.38  0.35 0 0 0 0.36  0.3 0 0 0 0.04  0 0 0 0 1"/></filter><filter id="tc5" x="0" y="0" width="100%" height="100%" color-interpolation-filters="sRGB"><feTurbulence type="fractalNoise" baseFrequency="0.4" numOctaves="2" seed="3"/><feColorMatrix values="0.3 0 0 0 0.33  0.3 0 0 0 0.33  0.3 0 0 0 0.33  0 0 0 0 1"/></filter><filter id="tc6" x="0" y="0" width="100%" height="100%" color-interpolation-filters="sRGB"><feTurbulence type="fractalNoise" baseFrequency="0.05 0.5" numOctaves="2" seed="11"/><feColorMatrix values="0.3 0 0 0 0.55  0.3 0 0 0 0.51  0.3 0 0 0 0.33  0 0 0 0 1"/></filter></defs></svg>
<div class="a" style="left:1594px;top:99px;width:6px;height:927px;background:#f0f0f0"></div>
<div class="a" style="left:1594px;top:99px;width:2px;height:927px;background:#fff"></div>
<div class="a" style="left:1600px;top:100px;width:320px;height:27px;background:linear-gradient(#c3d1e1,#d4dfeb 60%,#dfe8f2)"></div>
<div class="a" style="left:1604px;top:107px;font-size:13.5px;line-height:16px;letter-spacing:0.1px;white-space:nowrap;color:#0a0a14">Bandeja predeterminada</div>
<svg class="a" style="left:1884px;top:106px" width="14" height="16"><path d="M4 2 h6 v1 h-1 v5 l2 2 h-8 l2 -2 v-5 h-1z" fill="#000"/><rect x="6.5" y="10" width="1.2" height="4" fill="#000"/></svg>
<div class="a" style="left:1904px;top:108px;width:12px;height:12px;background:#d8404a"></div>
<svg class="a" style="left:1904px;top:108px" width="12" height="12"><path d="M3.5 3.5 L8.5 8.5 M8.5 3.5 L3.5 8.5" stroke="#fff" stroke-width="1.6"/></svg>
<div class="a" style="left:1600px;top:127px;width:280px;height:204px;background:#fff;overflow:hidden">
<div class="a" style="left:6px;top:-52px;width:62px;height:62px;border:1px solid #b4b4b4;background:#fff"></div>
<div class="a" style="left:8px;top:-50px;width:58px;height:58px;background:#3c3c3c"></div>
<svg class="a" style="left:54px;top:-4px" width="12" height="12"><path d="M11 1 L11 11 L1 11z" fill="#fff" stroke="#ddd" stroke-width="1"/></svg>
<div class="a" style="left:70px;top:-52px;width:62px;height:62px;border:1px solid #b4b4b4;background:#fff"></div>
<div class="a" style="left:72px;top:-50px;width:58px;height:58px;background:#c0805a"></div>
<svg class="a" style="left:118px;top:-4px" width="12" height="12"><path d="M11 1 L11 11 L1 11z" fill="#fff" stroke="#ddd" stroke-width="1"/></svg>
<div class="a" style="left:134px;top:-52px;width:62px;height:62px;border:1px solid #b4b4b4;background:#fff"></div>
<div class="a" style="left:136px;top:-50px;width:58px;height:58px;background:#f40000"></div>
<svg class="a" style="left:182px;top:-4px" width="12" height="12"><path d="M11 1 L11 11 L1 11z" fill="#fff" stroke="#ddd" stroke-width="1"/></svg>
<div class="a" style="left:198px;top:-52px;width:62px;height:62px;border:1px solid #b4b4b4;background:#fff"></div>
<div class="a" style="left:200px;top:-50px;width:58px;height:58px;background:#00cc00"></div>
<svg class="a" style="left:246px;top:-4px" width="12" height="12"><path d="M11 1 L11 11 L1 11z" fill="#fff" stroke="#ddd" stroke-width="1"/></svg>
<div class="a" style="left:6px;top:12px;width:62px;height:62px;border:1px solid #b4b4b4;background:#fff"></div>
<svg class="a" style="left:54px;top:60px" width="12" height="12"><path d="M11 1 L11 11 L1 11z" fill="none" stroke="#999" stroke-width="1"/></svg>
<div class="a" style="left:70px;top:12px;width:62px;height:62px;border:1px solid #b4b4b4;background:#fff"></div>
<svg class="a" style="left:72px;top:14px" width="58" height="58"><rect width="58" height="58" filter="url(#tc1)"/></svg>
<svg class="a" style="left:118px;top:60px" width="12" height="12"><path d="M11 1 L11 11 L1 11z" fill="#fff" stroke="#ddd" stroke-width="1"/></svg>
<div class="a" style="left:134px;top:12px;width:62px;height:62px;border:1px solid #b4b4b4;background:#fff"></div>
<svg class="a" style="left:136px;top:14px" width="58" height="58"><rect width="58" height="58" filter="url(#tc2)"/></svg>
<svg class="a" style="left:182px;top:60px" width="12" height="12"><path d="M11 1 L11 11 L1 11z" fill="#fff" stroke="#ddd" stroke-width="1"/></svg>
<div class="a" style="left:198px;top:12px;width:62px;height:62px;border:1px solid #b4b4b4;background:#fff"></div>
<svg class="a" style="left:200px;top:14px" width="58" height="58"><rect width="58" height="58" filter="url(#tc3)"/></svg>
<svg class="a" style="left:246px;top:60px" width="12" height="12"><path d="M11 1 L11 11 L1 11z" fill="#fff" stroke="#ddd" stroke-width="1"/></svg>
<div class="a" style="left:6px;top:76px;width:62px;height:62px;border:1px solid #b4b4b4;background:#fff"></div>
<svg class="a" style="left:8px;top:88px" width="58" height="38"><rect width="58" height="38" filter="url(#brk)"/><rect x="0" y="3" width="58" height="1" fill="#d8c8b8" opacity="0.8"/><rect x="0" y="7" width="58" height="1" fill="#d8c8b8" opacity="0.8"/><rect x="0" y="11" width="58" height="1" fill="#d8c8b8" opacity="0.8"/><rect x="0" y="15" width="58" height="1" fill="#d8c8b8" opacity="0.8"/><rect x="0" y="19" width="58" height="1" fill="#d8c8b8" opacity="0.8"/><rect x="0" y="23" width="58" height="1" fill="#d8c8b8" opacity="0.8"/><rect x="0" y="27" width="58" height="1" fill="#d8c8b8" opacity="0.8"/><rect x="0" y="31" width="58" height="1" fill="#d8c8b8" opacity="0.8"/><rect x="0" y="35" width="58" height="1" fill="#d8c8b8" opacity="0.8"/><rect x="0" y="0" width="1" height="3" fill="#d8c8b8" opacity="0.7"/><rect x="8" y="0" width="1" height="3" fill="#d8c8b8" opacity="0.7"/><rect x="16" y="0" width="1" height="3" fill="#d8c8b8" opacity="0.7"/><rect x="24" y="0" width="1" height="3" fill="#d8c8b8" opacity="0.7"/><rect x="32" y="0" width="1" height="3" fill="#d8c8b8" opacity="0.7"/><rect x="40" y="0" width="1" height="3" fill="#d8c8b8" opacity="0.7"/><rect x="48" y="0" width="1" height="3" fill="#d8c8b8" opacity="0.7"/><rect x="56" y="0" width="1" height="3" fill="#d8c8b8" opacity="0.7"/><rect x="4" y="4" width="1" height="3" fill="#d8c8b8" opacity="0.7"/><rect x="12" y="4" width="1" height="3" fill="#d8c8b8" opacity="0.7"/><rect x="20" y="4" width="1" height="3" fill="#d8c8b8" opacity="0.7"/><rect x="28" y="4" width="1" height="3" fill="#d8c8b8" opacity="0.7"/><rect x="36" y="4" width="1" height="3" fill="#d8c8b8" opacity="0.7"/><rect x="44" y="4" width="1" height="3" fill="#d8c8b8" opacity="0.7"/><rect x="52" y="4" width="1" height="3" fill="#d8c8b8" opacity="0.7"/><rect x="2" y="4" width="1" height="3" fill="#d8c8b8" opacity="0.7"/><rect x="0" y="8" width="1" height="3" fill="#d8c8b8" opacity="0.7"/><rect x="8" y="8" width="1" height="3" fill="#d8c8b8" opacity="0.7"/><rect x="16" y="8" width="1" height="3" fill="#d8c8b8" opacity="0.7"/><rect x="24" y="8" width="1" height="3" fill="#d8c8b8" opacity="0.7"/><rect x="32" y="8" width="1" height="3" fill="#d8c8b8" opacity="0.7"/><rect x="40" y="8" width="1" height="3" fill="#d8c8b8" opacity="0.7"/><rect x="48" y="8" width="1" height="3" fill="#d8c8b8" opacity="0.7"/><rect x="56" y="8" width="1" height="3" fill="#d8c8b8" opacity="0.7"/><rect x="4" y="12" width="1" height="3" fill="#d8c8b8" opacity="0.7"/><rect x="12" y="12" width="1" height="3" fill="#d8c8b8" opacity="0.7"/><rect x="20" y="12" width="1" height="3" fill="#d8c8b8" opacity="0.7"/><rect x="28" y="12" width="1" height="3" fill="#d8c8b8" opacity="0.7"/><rect x="36" y="12" width="1" height="3" fill="#d8c8b8" opacity="0.7"/><rect x="44" y="12" width="1" height="3" fill="#d8c8b8" opacity="0.7"/><rect x="52" y="12" width="1" height="3" fill="#d8c8b8" opacity="0.7"/><rect x="2" y="12" width="1" height="3" fill="#d8c8b8" opacity="0.7"/><rect x="0" y="16" width="1" height="3" fill="#d8c8b8" opacity="0.7"/><rect x="8" y="16" width="1" height="3" fill="#d8c8b8" opacity="0.7"/><rect x="16" y="16" width="1" height="3" fill="#d8c8b8" opacity="0.7"/><rect x="24" y="16" width="1" height="3" fill="#d8c8b8" opacity="0.7"/><rect x="32" y="16" width="1" height="3" fill="#d8c8b8" opacity="0.7"/><rect x="40" y="16" width="1" height="3" fill="#d8c8b8" opacity="0.7"/><rect x="48" y="16" width="1" height="3" fill="#d8c8b8" opacity="0.7"/><rect x="56" y="16" width="1" height="3" fill="#d8c8b8" opacity="0.7"/><rect x="4" y="20" width="1" height="3" fill="#d8c8b8" opacity="0.7"/><rect x="12" y="20" width="1" height="3" fill="#d8c8b8" opacity="0.7"/><rect x="20" y="20" width="1" height="3" fill="#d8c8b8" opacity="0.7"/><rect x="28" y="20" width="1" height="3" fill="#d8c8b8" opacity="0.7"/><rect x="36" y="20" width="1" height="3" fill="#d8c8b8" opacity="0.7"/><rect x="44" y="20" width="1" height="3" fill="#d8c8b8" opacity="0.7"/><rect x="52" y="20" width="1" height="3" fill="#d8c8b8" opacity="0.7"/><rect x="2" y="20" width="1" height="3" fill="#d8c8b8" opacity="0.7"/><rect x="0" y="24" width="1" height="3" fill="#d8c8b8" opacity="0.7"/><rect x="8" y="24" width="1" height="3" fill="#d8c8b8" opacity="0.7"/><rect x="16" y="24" width="1" height="3" fill="#d8c8b8" opacity="0.7"/><rect x="24" y="24" width="1" height="3" fill="#d8c8b8" opacity="0.7"/><rect x="32" y="24" width="1" height="3" fill="#d8c8b8" opacity="0.7"/><rect x="40" y="24" width="1" height="3" fill="#d8c8b8" opacity="0.7"/><rect x="48" y="24" width="1" height="3" fill="#d8c8b8" opacity="0.7"/><rect x="56" y="24" width="1" height="3" fill="#d8c8b8" opacity="0.7"/><rect x="4" y="28" width="1" height="3" fill="#d8c8b8" opacity="0.7"/><rect x="12" y="28" width="1" height="3" fill="#d8c8b8" opacity="0.7"/><rect x="20" y="28" width="1" height="3" fill="#d8c8b8" opacity="0.7"/><rect x="28" y="28" width="1" height="3" fill="#d8c8b8" opacity="0.7"/><rect x="36" y="28" width="1" height="3" fill="#d8c8b8" opacity="0.7"/><rect x="44" y="28" width="1" height="3" fill="#d8c8b8" opacity="0.7"/><rect x="52" y="28" width="1" height="3" fill="#d8c8b8" opacity="0.7"/><rect x="2" y="28" width="1" height="3" fill="#d8c8b8" opacity="0.7"/><rect x="0" y="32" width="1" height="3" fill="#d8c8b8" opacity="0.7"/><rect x="8" y="32" width="1" height="3" fill="#d8c8b8" opacity="0.7"/><rect x="16" y="32" width="1" height="3" fill="#d8c8b8" opacity="0.7"/><rect x="24" y="32" width="1" height="3" fill="#d8c8b8" opacity="0.7"/><rect x="32" y="32" width="1" height="3" fill="#d8c8b8" opacity="0.7"/><rect x="40" y="32" width="1" height="3" fill="#d8c8b8" opacity="0.7"/><rect x="48" y="32" width="1" height="3" fill="#d8c8b8" opacity="0.7"/><rect x="56" y="32" width="1" height="3" fill="#d8c8b8" opacity="0.7"/><rect x="4" y="36" width="1" height="3" fill="#d8c8b8" opacity="0.7"/><rect x="12" y="36" width="1" height="3" fill="#d8c8b8" opacity="0.7"/><rect x="20" y="36" width="1" height="3" fill="#d8c8b8" opacity="0.7"/><rect x="28" y="36" width="1" height="3" fill="#d8c8b8" opacity="0.7"/><rect x="36" y="36" width="1" height="3" fill="#d8c8b8" opacity="0.7"/><rect x="44" y="36" width="1" height="3" fill="#d8c8b8" opacity="0.7"/><rect x="52" y="36" width="1" height="3" fill="#d8c8b8" opacity="0.7"/><rect x="2" y="36" width="1" height="3" fill="#d8c8b8" opacity="0.7"/></svg>
<svg class="a" style="left:54px;top:124px" width="12" height="12"><path d="M11 1 L11 11 L1 11z" fill="none" stroke="#999" stroke-width="1"/></svg>
<div class="a" style="left:70px;top:76px;width:62px;height:62px;border:1px solid #b4b4b4;background:#fff"></div>
<svg class="a" style="left:72px;top:78px" width="58" height="58"><rect width="58" height="58" filter="url(#tc4)"/></svg>
<svg class="a" style="left:118px;top:124px" width="12" height="12"><path d="M11 1 L11 11 L1 11z" fill="#fff" stroke="#ddd" stroke-width="1"/></svg>
<div class="a" style="left:134px;top:76px;width:62px;height:62px;border:1px solid #b4b4b4;background:#fff"></div>
<svg class="a" style="left:136px;top:93px" width="58" height="29"><rect width="58" height="29" filter="url(#tc6)"/></svg>
<svg class="a" style="left:182px;top:124px" width="12" height="12"><path d="M11 1 L11 11 L1 11z" fill="none" stroke="#999" stroke-width="1"/></svg>
<div class="a" style="left:133px;top:75px;width:64px;height:64px;border:3px solid #1c74c8"></div>
<div class="a" style="left:198px;top:76px;width:62px;height:62px;border:1px solid #b4b4b4;background:#fff"></div>
<div class="a" style="left:200px;top:78px;width:58px;height:58px;background:#000 radial-gradient(circle,#fff 0 1px,transparent 1.5px) 0 0/6px 6px"></div>
<svg class="a" style="left:246px;top:124px" width="12" height="12"><path d="M11 1 L11 11 L1 11z" fill="#fff" stroke="#ddd" stroke-width="1"/></svg>
<div class="a" style="left:6px;top:140px;width:62px;height:62px;border:1px solid #b4b4b4;background:#fff"></div>
<div class="a" style="left:8px;top:142px;width:58px;height:58px;background:linear-gradient(90deg,#e8e8e8,#a8a8a8 20%,#f0f0f0 45%,#a0a0a0 70%,#e8e8e8)"></div>
<svg class="a" style="left:54px;top:188px" width="12" height="12"><path d="M11 1 L11 11 L1 11z" fill="#fff" stroke="#ddd" stroke-width="1"/></svg>
<div class="a" style="left:70px;top:140px;width:62px;height:62px;border:1px solid #b4b4b4;background:#fff"></div>
<svg class="a" style="left:72px;top:142px" width="58" height="58"><rect width="58" height="58" filter="url(#tc5)"/></svg>
<svg class="a" style="left:118px;top:188px" width="12" height="12"><path d="M11 1 L11 11 L1 11z" fill="#fff" stroke="#ddd" stroke-width="1"/></svg>
<div class="a" style="left:134px;top:140px;width:62px;height:62px;border:1px solid #b4b4b4;background:#fff"></div>
<div class="a" style="left:141px;top:142px;width:52px;height:58px;background:repeating-linear-gradient(90deg,#9c5e30 0 3px,#b87840 3px 6px)"></div>
<svg class="a" style="left:182px;top:188px" width="12" height="12"><path d="M11 1 L11 11 L1 11z" fill="#fff" stroke="#ddd" stroke-width="1"/></svg>
<div class="a" style="left:198px;top:140px;width:62px;height:62px;border:1px solid #b4b4b4;background:#fff"></div>
<div class="a" style="left:200px;top:142px;width:58px;height:58px;background:repeating-linear-gradient(#e4c48c 0 4px,#d0a868 4px 6px,#ecd8a8 6px 9px)"></div>
<svg class="a" style="left:246px;top:188px" width="12" height="12"><path d="M11 1 L11 11 L1 11z" fill="#fff" stroke="#ddd" stroke-width="1"/></svg>
</div>
<div class="a" style="left:1880px;top:127px;width:19px;height:204px;background:#f0f0f0"></div>
<div class="a" style="left:1880px;top:150px;width:19px;height:21px;background:#cdcdcd"></div>
<div class="a" style="left:1899px;top:127px;width:21px;height:899px;background:#f0f0f0;border-left:1px solid #e6e6e6"></div>
<svg class="a" style="left:1903px;top:134px" width="14" height="10"><path d="M2 8 L7 3 L12 8" fill="none" stroke="#505050" stroke-width="1.6"/></svg>
<svg class="a" style="left:1883px;top:311px" width="14" height="10"><path d="M2 2 L7 7 L12 2" fill="none" stroke="#505050" stroke-width="1.6"/></svg>
<div class="a" style="left:1900px;top:435px;width:19px;height:20px;background:#cdcdcd"></div>
<div class="a" style="left:1600px;top:331px;width:299px;height:4px;background:#ececec;border-bottom:1px solid #c9c9c9"></div>
<div class="a" style="left:1600px;top:336px;width:299px;height:22px;background:linear-gradient(#f4f4f4,#e2e2e2 45%,#cdcdcd 85%,#bdbdbd);border-top:1px solid #e0e0e0"></div>
<svg class="a" style="left:1609px;top:342px" width="12" height="12"><path d="M1 0.5 L9.5 5 L1 9.5z" fill="#000"/></svg>
<div class="a" style="left:1627px;top:339px;font-size:14px;line-height:16px;letter-spacing:0.35px;white-space:nowrap;color:#000">Componentes</div>
<div class="a" style="left:1880px;top:338px;width:17px;height:17px;background:#ededed;border:1px solid #b8b8b8;outline:1px solid #f8f8f8"></div>
<svg class="a" style="left:1880px;top:338px" width="17" height="17"><path d="M5.5 5.5 L11.5 11.5 M11.5 5.5 L5.5 11.5" stroke="#000" stroke-width="1.7"/></svg>
<div class="a" style="left:1600px;top:360px;width:299px;height:22px;background:linear-gradient(#f4f4f4,#e2e2e2 45%,#cdcdcd 85%,#bdbdbd);border-top:1px solid #e0e0e0"></div>
<svg class="a" style="left:1609px;top:366px" width="12" height="12"><path d="M1 0.5 L9.5 5 L1 9.5z" fill="#000"/></svg>
<div class="a" style="left:1627px;top:363px;font-size:14px;line-height:16px;letter-spacing:0.35px;white-space:nowrap;color:#000">Etiquetas</div>
<div class="a" style="left:1880px;top:362px;width:17px;height:17px;background:#ededed;border:1px solid #b8b8b8;outline:1px solid #f8f8f8"></div>
<svg class="a" style="left:1880px;top:362px" width="17" height="17"><path d="M5.5 5.5 L11.5 11.5 M11.5 5.5 L5.5 11.5" stroke="#000" stroke-width="1.7"/></svg>
<div class="a" style="left:1600px;top:384px;width:299px;height:22px;background:linear-gradient(#f4f4f4,#e2e2e2 45%,#cdcdcd 85%,#bdbdbd);border-top:1px solid #e0e0e0"></div>
<svg class="a" style="left:1609px;top:390px" width="12" height="12"><path d="M1 0.5 L9.5 5 L1 9.5z" fill="#000"/></svg>
<div class="a" style="left:1627px;top:387px;font-size:14px;line-height:16px;letter-spacing:0.35px;white-space:nowrap;color:#000">Sombras</div>
<div class="a" style="left:1880px;top:386px;width:17px;height:17px;background:#ededed;border:1px solid #b8b8b8;outline:1px solid #f8f8f8"></div>
<svg class="a" style="left:1880px;top:386px" width="17" height="17"><path d="M5.5 5.5 L11.5 11.5 M11.5 5.5 L5.5 11.5" stroke="#000" stroke-width="1.7"/></svg>
<div class="a" style="left:1600px;top:408px;width:299px;height:22px;background:linear-gradient(#f4f4f4,#e2e2e2 45%,#cdcdcd 85%,#bdbdbd);border-top:1px solid #e0e0e0"></div>
<svg class="a" style="left:1609px;top:414px" width="12" height="12"><path d="M1 0.5 L9.5 5 L1 9.5z" fill="#000"/></svg>
<div class="a" style="left:1627px;top:411px;font-size:14px;line-height:16px;letter-spacing:0.35px;white-space:nowrap;color:#000">Instructor</div>
<div class="a" style="left:1880px;top:410px;width:17px;height:17px;background:#ededed;border:1px solid #b8b8b8;outline:1px solid #f8f8f8"></div>
<svg class="a" style="left:1880px;top:410px" width="17" height="17"><path d="M5.5 5.5 L11.5 11.5 M11.5 5.5 L5.5 11.5" stroke="#000" stroke-width="1.7"/></svg>
<div class="a" style="left:1600px;top:432px;width:299px;height:22px;background:linear-gradient(#f4f4f4,#e2e2e2 45%,#cdcdcd 85%,#bdbdbd);border-top:1px solid #e0e0e0"></div>
<svg class="a" style="left:1609px;top:438px" width="12" height="10"><path d="M0.5 0.5 L10.5 0.5 L5.5 9.5z" fill="#000"/></svg>
<div class="a" style="left:1627px;top:435px;font-size:14px;line-height:16px;letter-spacing:0.35px;white-space:nowrap;color:#000">Escenas</div>
<div class="a" style="left:1880px;top:434px;width:17px;height:17px;background:#ededed;border:1px solid #b8b8b8;outline:1px solid #f8f8f8"></div>
<svg class="a" style="left:1880px;top:434px" width="17" height="17"><path d="M5.5 5.5 L11.5 11.5 M11.5 5.5 L5.5 11.5" stroke="#000" stroke-width="1.7"/></svg>
<div class="a" style="left:1600px;top:454px;width:299px;height:32px;background:#f0f0f0;border-bottom:1px solid #a8a8a8"></div>
<svg class="a" style="left:1600px;top:454px" width="299" height="32"><path d="M9.5 12 A 7 7 0 0 1 22 11 M22.5 19 A 7 7 0 0 1 10 20" fill="none" stroke="#8a8a8a" stroke-width="2"/><path d="M23.5 7.5 L23.5 13 L18 12.5z M8.5 24.5 L8.5 19 L14 19.5z" fill="#8a8a8a"/><circle cx="42.4" cy="16" r="7.5" fill="#fff" stroke="#000" stroke-width="1.8"/><path d="M38 16 h9 M42.4 11.6 v9" stroke="#000" stroke-width="2.2"/><circle cx="69.5" cy="16" r="7.5" fill="none" stroke="#8a8a8a" stroke-width="1.5"/><path d="M65 16 h9" stroke="#8a8a8a" stroke-width="1.8"/><path d="M178 10 Q175 10 175 14 L175 22 M173 20 l2 3 l2 -3" fill="none" stroke="#8a8a8a" stroke-width="2"/><path d="M199 22 Q202 22 202 18 L202 10 M200 12 l2 -3 l2 3" fill="none" stroke="#8a8a8a" stroke-width="2"/><rect x="221" y="8" width="5" height="5" fill="none" stroke="#111" stroke-width="1.4"/><rect x="221" y="19" width="5" height="5" fill="none" stroke="#111" stroke-width="1.4"/><path d="M228 8.5 h7 M228 11 h6 M228 13 h5 M228 19.5 h7 M228 22 h6 M228 24 h5" stroke="#333" stroke-width="1.1"/><path d="M236 14 h5 l-2.5 3z" fill="#111"/><rect x="251" y="7" width="12" height="18" fill="#111"/><path d="M252.5 8.5 h9 l-4.5 5z" fill="#fff"/><rect x="252.5" y="14" width="9" height="0.8" fill="#fff"/><path d="M257 17 v6 M254 20 h6" stroke="#fff" stroke-width="1.8"/><path d="M276 9 h10 l7 7 l-7 7 h-10z" fill="#111"/><rect x="277.5" y="11" width="8" height="10" fill="#3a80d0" stroke="#fff" stroke-width="0.8"/><path d="M279 14 h5 M279 16.5 h5 M279 19 h5" stroke="#dde" stroke-width="0.8"/></svg>
<div class="a" style="left:1600px;top:487px;width:299px;height:426px;background:#fff"></div>
<div class="a" style="left:1600px;top:913px;width:299px;height:10px;background:#f0f0f0;border-top:1px solid #f4f4f4"></div>
<div class="a" style="left:1601px;top:916px;width:297px;height:7px;border:1px solid #c4c4c4;border-bottom:none;background:#ececec"></div>
<div class="a" style="left:1600px;top:923px;width:299px;height:22px;background:linear-gradient(#f4f4f4,#e2e2e2 45%,#cdcdcd 85%,#bdbdbd);border-top:1px solid #e0e0e0"></div>
<svg class="a" style="left:1609px;top:929px" width="12" height="10"><path d="M0.5 0.5 L10.5 0.5 L5.5 9.5z" fill="#000"/></svg>
<div class="a" style="left:1627px;top:926px;font-size:14px;line-height:16px;letter-spacing:0.35px;white-space:nowrap;color:#000">Estilos</div>
<div class="a" style="left:1880px;top:925px;width:17px;height:17px;background:#ededed;border:1px solid #b8b8b8;outline:1px solid #f8f8f8"></div>
<svg class="a" style="left:1880px;top:925px" width="17" height="17"><path d="M5.5 5.5 L11.5 11.5 M11.5 5.5 L5.5 11.5" stroke="#000" stroke-width="1.7"/></svg>
<div class="a" style="left:1600px;top:946px;width:299px;height:80px;background:#f0f0f0"></div>
<div class="a" style="left:1603px;top:948px;width:76px;height:78px;border:1px solid #c8c8c8;background:linear-gradient(#e8e8e8,#d8d8d8 40%,#b8b8b6 45%,#b0b0ae)"></div>
<svg class="a" style="left:1603px;top:948px" width="76" height="78"><path d="M6 7 v20" stroke="#3040c0" stroke-width="1"/><path d="M40 72 l14 5" stroke="#e02020" stroke-width="1.2"/><path d="M6 31 L27 15 L52 11 L52 25 L27 31z" fill="#c4c4c4" stroke="#111" stroke-width="1.2"/><path d="M6 31 L27 31 L27 71 L8 64z" fill="#fafafa" stroke="#111" stroke-width="1.2"/><path d="M27 31 L52 25 L52 58 L27 71z" fill="#f2f2f2" stroke="#111" stroke-width="1.2"/><path d="M39 36 L39 67 Q54 74 70 67 L70 36z" fill="#b8c8d4" stroke="#111" stroke-width="1.2"/><ellipse cx="54.5" cy="36" rx="15.5" ry="3.5" fill="#c4d2dc" stroke="#111" stroke-width="1.1"/></svg>
<div class="a" style="left:1682px;top:948px;width:185px;height:24px;background:#fff;border:1px solid #a8a8a8"></div>
<div class="a" style="left:1688px;top:952px;font-size:12.5px;line-height:14px;letter-spacing:0.15px;white-space:nowrap;color:#000">Estilo de diseño arquitectónico</div>
<div class="a" style="left:1682px;top:974px;width:185px;height:60px;background:#fff;border:1px solid #a8a8a8"></div>
<div class="a" style="left:1688px;top:978px;width:178px;font-size:12.5px;line-height:16px;letter-spacing:0.15px;white-space:nowrap;color:#000">Colores de cara<br>predeterminados. Bordes de<br>perfil. Cielo azul y color de</div>
<svg class="a" style="left:1870px;top:948px" width="29" height="78"><rect x="8" y="4" width="12" height="18" fill="#111"/><path d="M9.5 5.5 h9 l-4.5 5z" fill="#fff"/><rect x="9.5" y="11" width="9" height="1" fill="#fff"/><path d="M14 14 v6 M11 17 h6" stroke="#fff" stroke-width="1.8"/><path d="M12 38 L19 32 L23 36 L16 42z" fill="#b8b890" stroke="#555" stroke-width="0.8"/><rect x="18" y="37" width="7" height="8" rx="2" fill="#3040c0"/><circle cx="12" cy="45" r="5" fill="#fff" stroke="#111" stroke-width="1.5"/><path d="M9 45 h6 M12 42 v6" stroke="#111" stroke-width="1.5"/><path d="M9 72 A 7 7 0 0 1 21 70" fill="none" stroke="#9a9a9a" stroke-width="2"/></svg>
</body></html>
